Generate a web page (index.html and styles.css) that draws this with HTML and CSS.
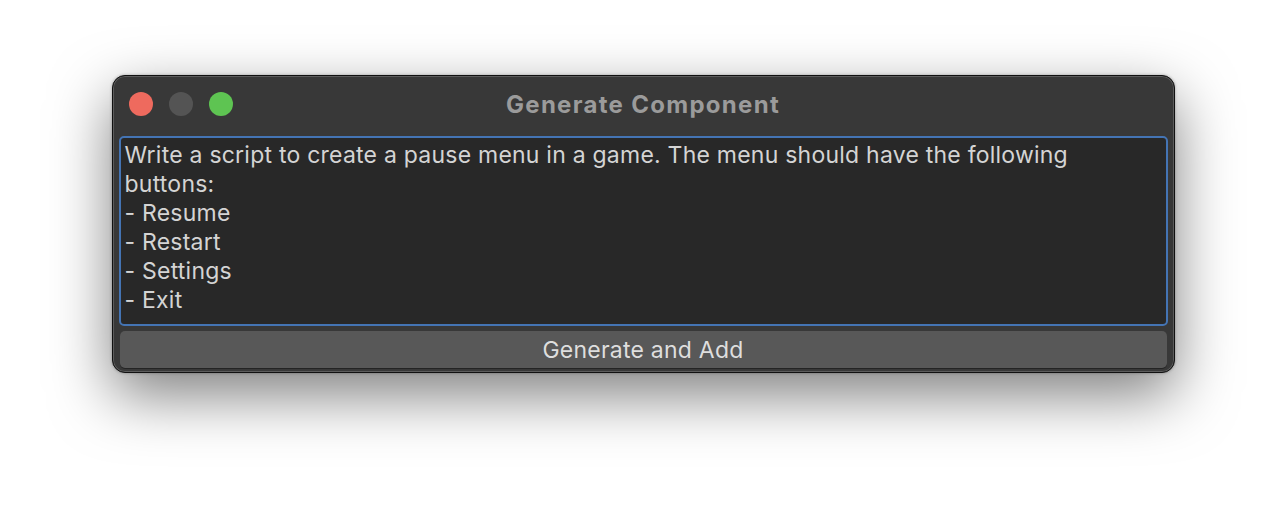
FILE: index.html
```html
<!DOCTYPE html>
<html lang="en">
<head>
    <meta charset="UTF-8">
    <title>Generate Component</title>
    <link rel="stylesheet" href="styles.css">
</head>
<body>
    <div class="window">
        <div class="titlebar">
            <div class="lights">
                <span class="light red"></span>
                <span class="light gray"></span>
                <span class="light green"></span>
            </div>
            <div class="title">Generate Component</div>
        </div>

        <div class="prompt">Write a script to create a pause menu in a game. The menu should have the following
buttons:
- Resume
- Restart
- Settings
- Exit</div>

        <button class="generate-button">Generate and Add</button>
    </div>
</body>
</html>
```

FILE: styles.css
```css
body {
    margin: 0;
    padding: 75px 0 0;
    min-height: 520px;
    box-sizing: border-box;
    background-color: #fff;
    font-family: Inter, "Noto Sans", sans-serif;
}

.window {
    width: 1063px;
    margin: 0 auto;
    padding: 0 6px 4px;
    box-sizing: border-box;
    background-color: #383838;
    border: 1px solid #111;
    border-radius: 13px;
    box-shadow: inset 0 0 0 1px #5c5c5c, 0 22px 60px rgba(0, 0, 0, 0.5), 0 0 3px rgba(0, 0, 0, 0.3);
}

.titlebar {
    height: 60px;
    display: flex;
    align-items: center;
    justify-content: center;
    position: relative;
}

.lights {
    position: absolute;
    left: 10px;
    top: 16px;
    display: flex;
    gap: 16px;
}

.light {
    width: 24px;
    height: 24px;
    border-radius: 50%;
}

.light.red {
    background-color: #ee6a5e;
}

.light.gray {
    background-color: #545454;
}

.light.green {
    background-color: #5ec452;
}

.title {
    color: #9b9b9b;
    font-size: 24px;
    font-weight: bold;
    letter-spacing: 1.3px;
    margin-top: -4px;
}

.prompt {
    height: 190px;
    box-sizing: border-box;
    padding: 3px 4px;
    background-color: #282828;
    border: 2px solid #4474b4;
    border-radius: 5px;
    color: #d4d4d4;
    font-size: 23px;
    letter-spacing: 0.23px;
    line-height: 29px;
    white-space: pre;
    overflow: hidden;
}

.generate-button {
    display: block;
    width: calc(100% - 2px);
    margin: 5px 1px 0;
    height: 37px;
    background-color: #585858;
    color: #dedede;
    border: none;
    border-radius: 5px;
    box-shadow: 0 1px 0 #242424;
    font-family: Inter, "Noto Sans", sans-serif;
    font-size: 23px;
    letter-spacing: 0.23px;
    padding: 0;
}
```
